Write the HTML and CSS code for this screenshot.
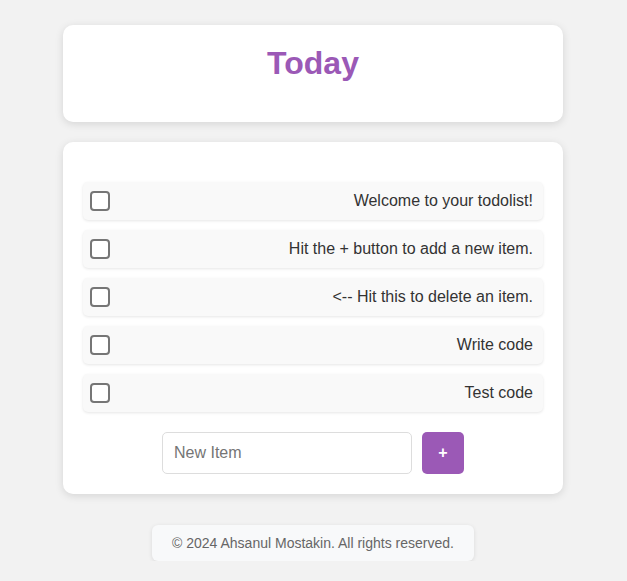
FILE: index.html
```html
<!DOCTYPE html>
<html lang="en">
<head>
<meta charset="utf-8">
<title>Todo List</title>
<link rel="stylesheet" href="styles.css">
</head>
<body>
<div class="container">
  <header class="header-card">
    <h1 class="title">Today</h1>
  </header>
  <main class="list-card">
    <ul class="items">
      <li class="item"><span class="check"></span><span class="text">Welcome to your todolist!</span></li>
      <li class="item"><span class="check"></span><span class="text">Hit the + button to add a new item.</span></li>
      <li class="item"><span class="check"></span><span class="text">&lt;-- Hit this to delete an item.</span></li>
      <li class="item"><span class="check"></span><span class="text">Write code</span></li>
      <li class="item"><span class="check"></span><span class="text">Test code</span></li>
    </ul>
    <form class="add-form">
      <input class="new-input" type="text" placeholder="New Item">
      <button class="add-btn" type="button">+</button>
    </form>
  </main>
  <footer class="footer-wrap">
    <p class="footer">© 2024 Ahsanul Mostakin. All rights reserved.</p>
  </footer>
</div>
</body>
</html>
```

FILE: styles.css
```css
* { box-sizing: border-box; }
body {
  margin: 0;
  padding-right: 1px;
  background: #f2f2f2;
  font-family: "Liberation Sans", Arial, sans-serif;
  color: #333;
}
.container {
  width: 500px;
  margin: 0 auto;
  padding-top: 25px;
}
.header-card {
  background: #fff;
  border-radius: 10px;
  box-shadow: 0 2px 8px rgba(0,0,0,0.12);
  padding: 18px 0 39px;
  text-align: center;
}
.title {
  margin: 0;
  font-size: 32px;
  line-height: 40px;
  color: #9b59b6;
  font-weight: bold;
}
.list-card {
  margin-top: 20px;
  background: #fff;
  border-radius: 10px;
  box-shadow: 0 2px 8px rgba(0,0,0,0.12);
  padding: 40px 20px 20px;
}
.items {
  list-style: none;
  margin: 0;
  padding: 0;
  display: flex;
  flex-direction: column;
  gap: 10px;
}
.item {
  height: 38px;
  display: flex;
  align-items: center;
  justify-content: space-between;
  background: #f9f9f9;
  border-radius: 5px;
  box-shadow: 0 1px 3px rgba(0,0,0,0.1);
  padding: 0 10px 0 7px;
  font-size: 16px;
}
.check {
  width: 20px;
  height: 20px;
  border: 2px solid #767676;
  border-radius: 4px;
  background: #fff;
}
.text { color: #333; }
.add-form {
  margin-top: 20px;
  display: flex;
  justify-content: center;
  gap: 10px;
}
.new-input {
  width: 250px;
  height: 42px;
  border: 1px solid #ddd;
  border-radius: 5px;
  padding: 0 11px;
  font-family: "Liberation Sans", Arial, sans-serif;
  font-size: 16px;
  color: #333;
  outline: none;
}
.new-input::placeholder { color: #757575; }
.add-btn {
  width: 42px;
  height: 42px;
  border: none;
  border-radius: 5px;
  background: #9b59b6;
  color: #fff;
  font-family: "Liberation Sans", Arial, sans-serif;
  font-weight: bold;
  font-size: 16px;
  padding: 0;
}
.footer-wrap {
  margin-top: 31px;
  display: flex;
  justify-content: center;
}
.footer {
  margin: 0;
  background: #f8f9fa;
  border-radius: 6px;
  box-shadow: 0 1px 4px rgba(0,0,0,0.1);
  padding: 10px 20px;
  font-size: 14px;
  line-height: 16px;
  color: #666;
}
```
